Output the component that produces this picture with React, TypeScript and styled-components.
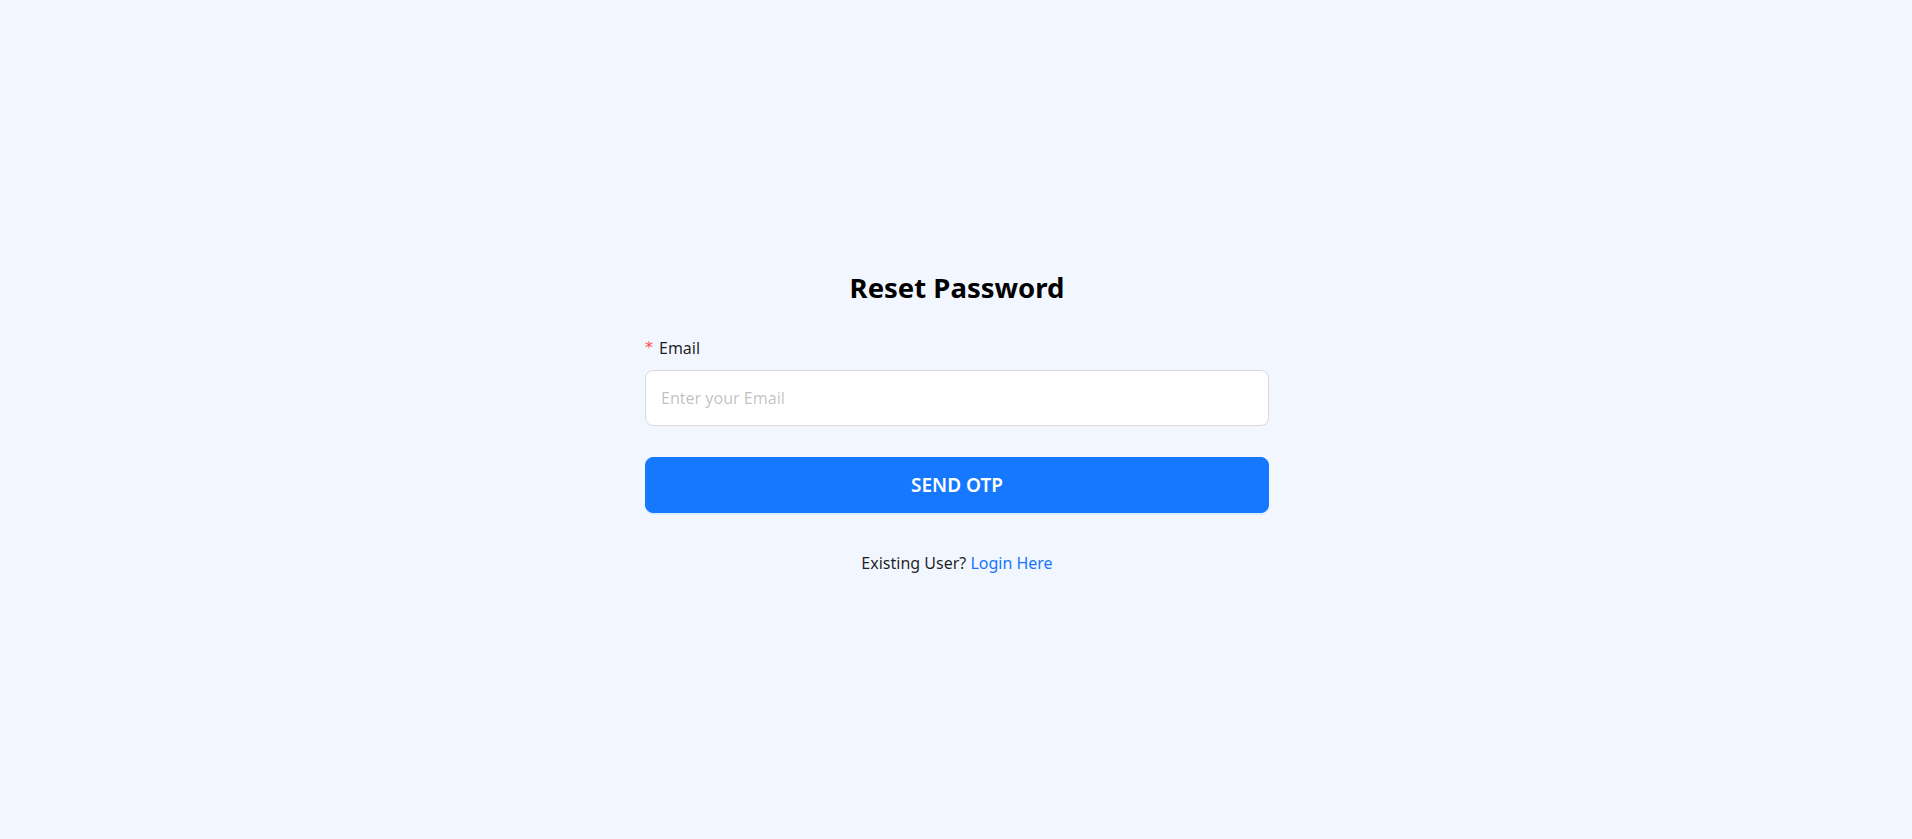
import React from "react";
import styled, { createGlobalStyle } from "styled-components";

const GlobalStyle = createGlobalStyle`
  html, body {
    margin: 0;
    padding: 0;
    background: #f2f7ff;
    font-family: "Segoe UI", "Noto Sans", "Open Sans", sans-serif;
  }
  * { box-sizing: border-box; }
`;

const Page = styled.main`
  min-height: 100vh;
  display: flex;
  align-items: center;
  justify-content: center;
  padding: 5px 0 0 2px;
`;

const Card = styled.form`
  width: 624px;
  display: flex;
  flex-direction: column;
`;

const Title = styled.h2`
  margin: 0 0 29px;
  text-align: center;
  font-size: 27.5px;
  line-height: 38px;
  font-weight: 700;
  color: #000;
`;

const Label = styled.label`
  display: flex;
  align-items: center;
  gap: 6px;
  font-size: 16px;
  line-height: 24px;
  color: rgba(0, 0, 0, 0.88);
  margin-bottom: 10px;
`;

const Required = styled.span`
  color: #ff4d4f;
  font-family: SimSun, "DejaVu Sans", sans-serif;
  font-size: 16px;
  line-height: 1;
`;

const Input = styled.input`
  height: 56px;
  width: 100%;
  padding: 0 15px;
  border: 1px solid #d9d9d9;
  border-radius: 8px;
  background: #fff;
  font-family: inherit;
  font-size: 16px;
  color: rgba(0, 0, 0, 0.88);
  outline: none;
  &::placeholder {
    color: rgba(0, 0, 0, 0.25);
  }
`;

const Button = styled.button`
  margin-top: 31px;
  height: 56px;
  width: 100%;
  border: 1px solid #1677ff;
  border-radius: 8px;
  background: #1677ff;
  color: #fff;
  font-family: inherit;
  font-size: 19px;
  font-weight: 600;
  box-shadow: 0 2px 0 rgba(5, 145, 255, 0.1);
  cursor: pointer;
`;

const Footer = styled.p`
  margin: 38px 0 0;
  text-align: center;
  font-size: 16px;
  line-height: 24px;
  color: rgba(0, 0, 0, 0.88);
`;

const LoginLink = styled.a`
  color: #1677ff;
  text-decoration: none;
`;

export default function App() {
  return (
    <>
      <GlobalStyle />
      <Page>
        <Card onSubmit={(e) => e.preventDefault()}>
          <Title>Reset Password</Title>
          <Label htmlFor="email">
            <Required>*</Required>
            Email
          </Label>
          <Input id="email" type="email" placeholder="Enter your Email" />
          <Button type="submit">SEND OTP</Button>
          <Footer>
            Existing User? <LoginLink href="#">Login Here</LoginLink>
          </Footer>
        </Card>
      </Page>
    </>
  );
}
